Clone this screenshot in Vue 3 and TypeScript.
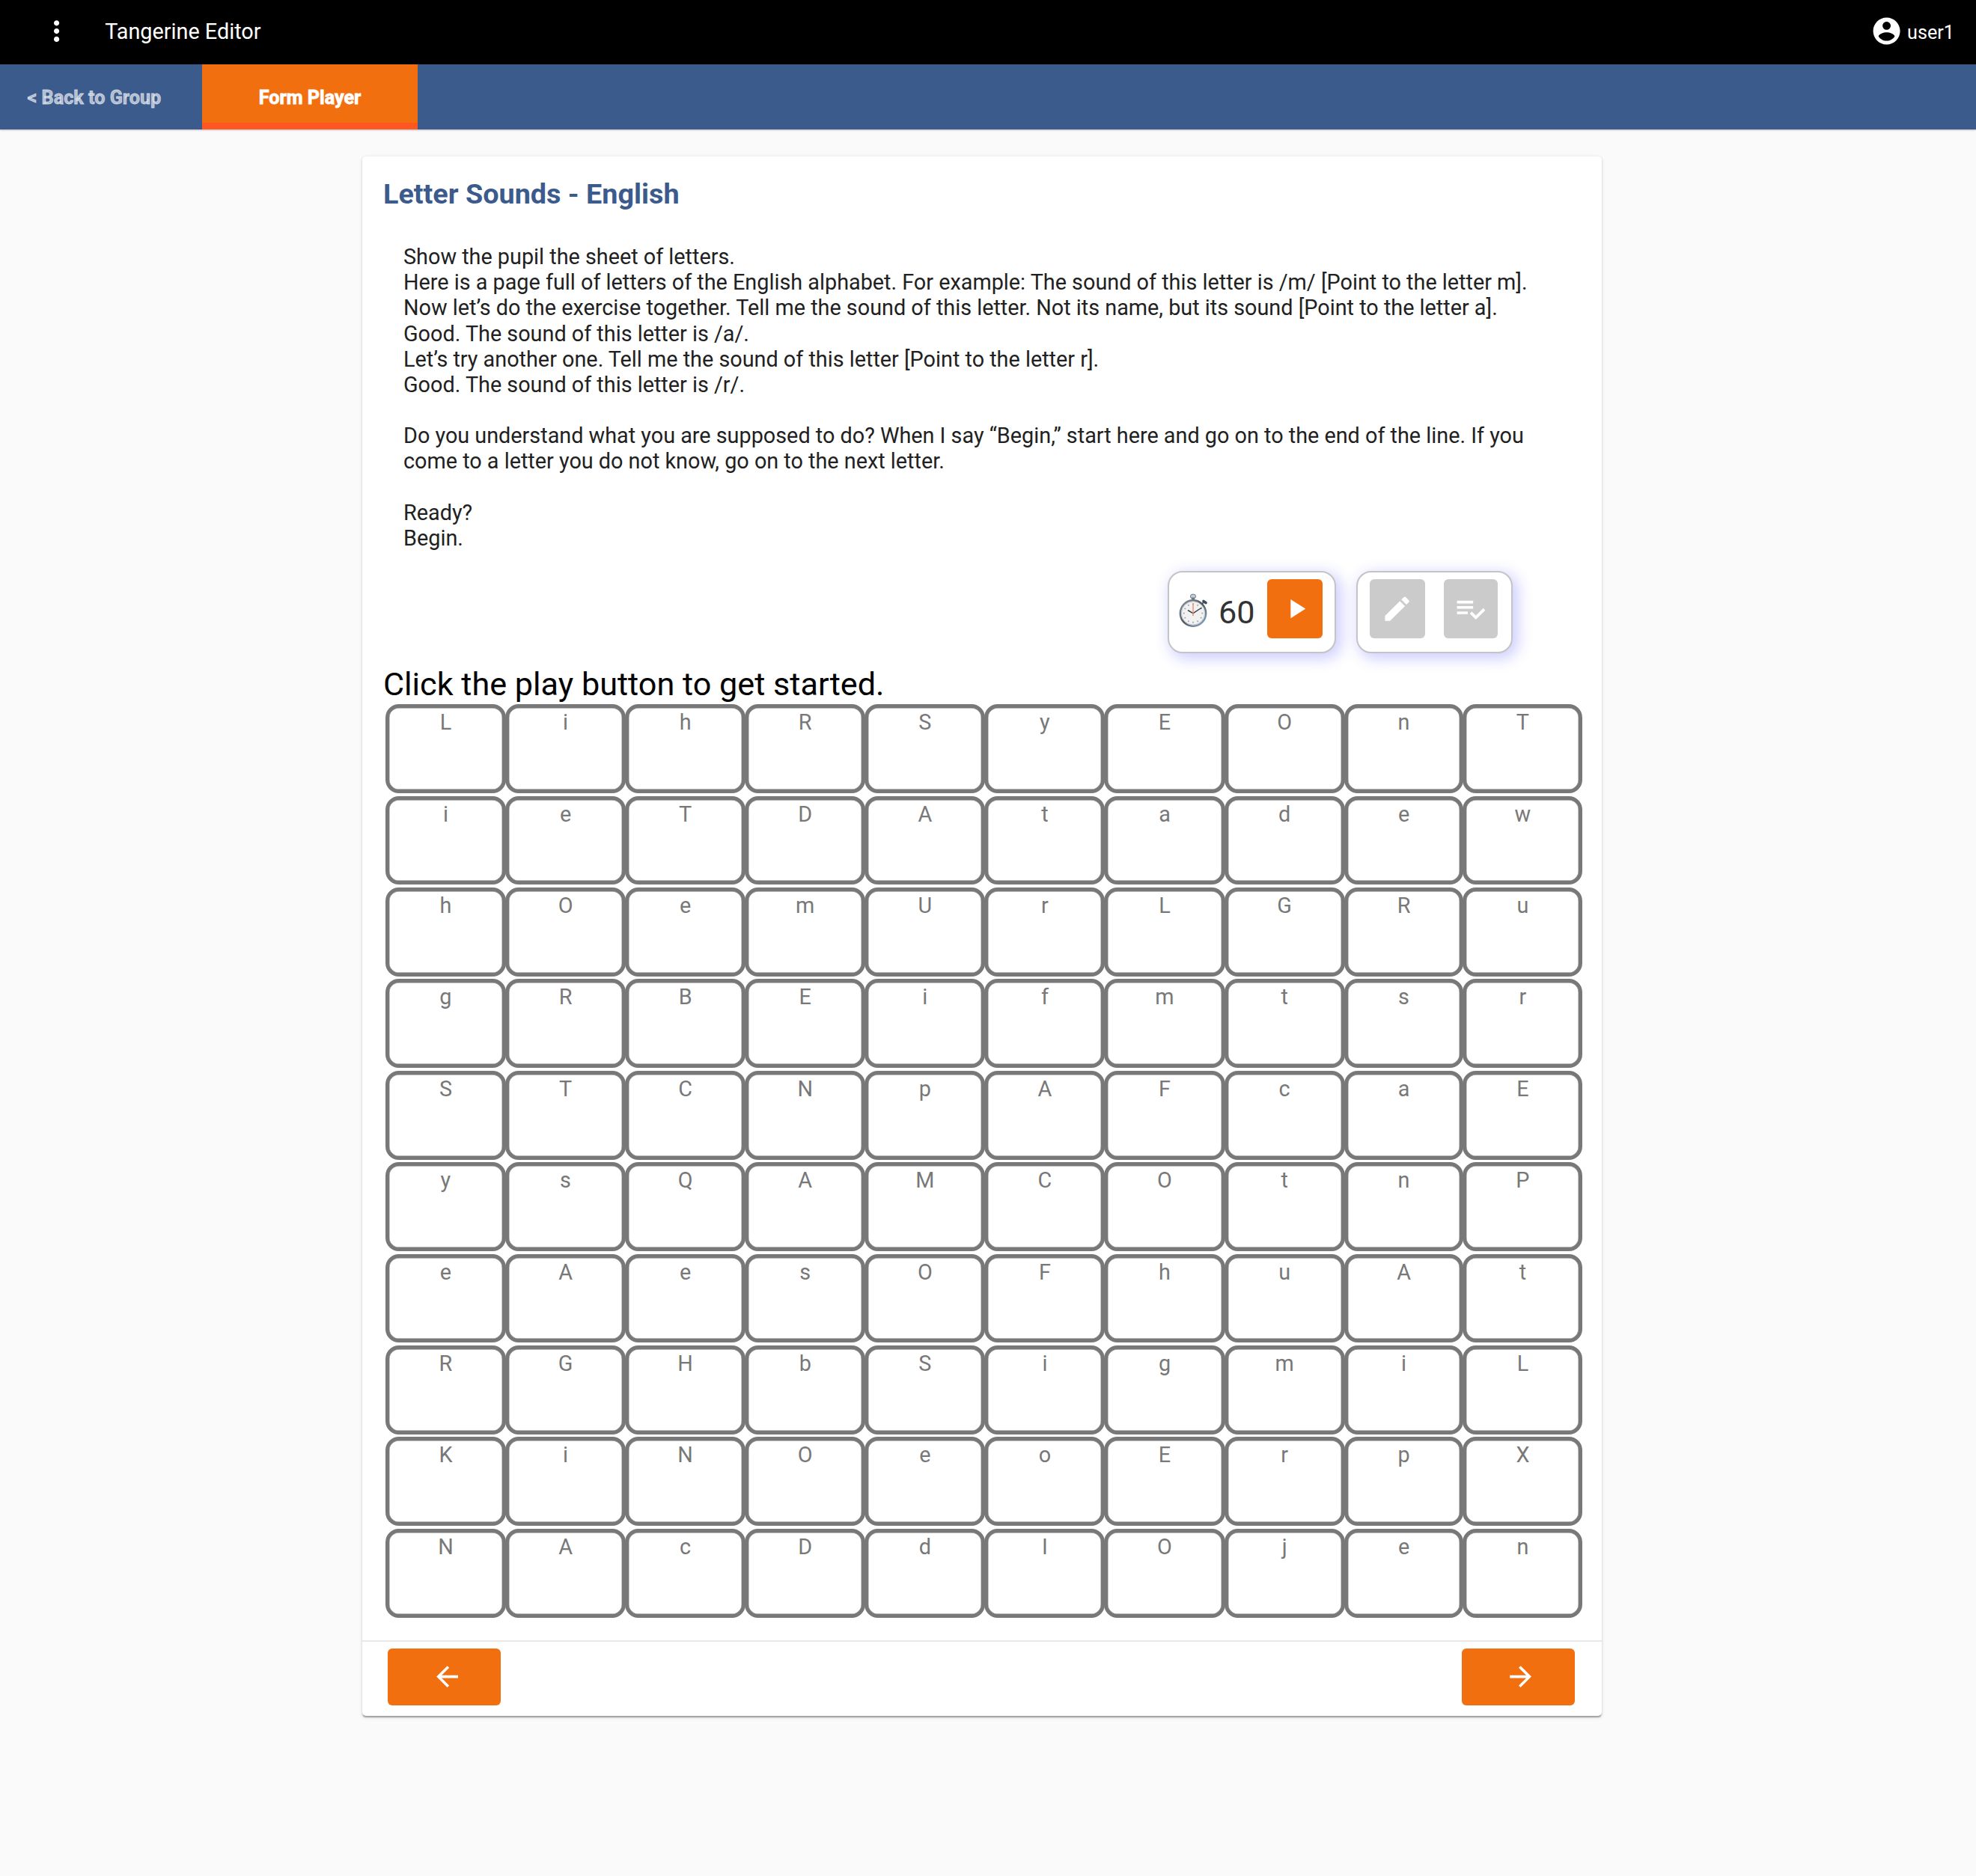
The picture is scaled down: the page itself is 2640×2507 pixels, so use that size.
<script setup lang="ts">
const rows: string[] = [
  'LihRSyEOnT',
  'ieTDAtadew',
  'hOemUrLGRu',
  'gRBEifmtsr',
  'STCNpAFcaE',
  'ysQAMCOtnP',
  'eAesOFhuAt',
  'RGHbSigmiL',
  'KiNOeoErpX',
  'NAcDdIOjen',
]
const instructions: string[] = [
  'Show the pupil the sheet of letters.',
  'Here is a page full of letters of the English alphabet. For example: The sound of this letter is /m/ [Point to the letter m].',
  'Now let’s do the exercise together. Tell me the sound of this letter. Not its name, but its sound [Point to the letter a].',
  'Good. The sound of this letter is /a/.',
  'Let’s try another one. Tell me the sound of this letter [Point to the letter r].',
  'Good. The sound of this letter is /r/.',
  '',
  'Do you understand what you are supposed to do? When I say “Begin,” start here and go on to the end of the line. If you',
  'come to a letter you do not know, go on to the next letter.',
  '',
  'Ready?',
  'Begin.',
]
const ticks: number[] = Array.from({ length: 12 }, (_, i) => i * 30)
</script>

<template>
  <div class="page">
    <header class="toolbar">
      <svg class="icon menu" viewBox="0 0 24 24"><path d="M12 8c1.1 0 2-.9 2-2s-.9-2-2-2-2 .9-2 2 .9 2 2 2zm0 2c-1.1 0-2 .9-2 2s.9 2 2 2 2-.9 2-2-.9-2-2-2zm0 6c-1.1 0-2 .9-2 2s.9 2 2 2 2-.9 2-2-.9-2-2-2z" /></svg>
      <span class="app-name">Tangerine Editor</span>
      <div class="user">
        <svg class="icon" viewBox="0 0 24 24"><path d="M12 2C6.48 2 2 6.48 2 12s4.48 10 10 10 10-4.48 10-10S17.52 2 12 2zm0 3c1.66 0 3 1.34 3 3s-1.34 3-3 3-3-1.34-3-3 1.34-3 3-3zm0 14.2c-2.5 0-4.71-1.28-6-3.22.03-1.99 4-3.08 6-3.08 1.99 0 5.97 1.09 6 3.08-1.29 1.94-3.5 3.22-6 3.22z" /></svg>
        <span class="user-name">user1</span>
      </div>
    </header>
    <nav class="tabs">
      <a class="tab back">&lt; Back to Group</a>
      <a class="tab active">Form Player</a>
    </nav>
    <main class="card">
      <h1 class="title">Letter Sounds - English</h1>
      <div class="instructions">
        <div v-for="(line, i) in instructions" :key="i" class="line">{{ line }}</div>
      </div>
      <div class="controls">
        <div class="panel timer">
          <svg class="stopwatch" viewBox="0 0 38 46">
            <defs>
              <linearGradient id="rim" x1="0" y1="0" x2="1" y2="1">
                <stop offset="0" stop-color="#8a98a6" />
                <stop offset="0.5" stop-color="#4c535b" />
                <stop offset="1" stop-color="#8fb0d0" />
              </linearGradient>
            </defs>
            <ellipse cx="19" cy="4" rx="3.6" ry="3" fill="#c3ccd3" stroke="#717c86" stroke-width="1" />
            <rect x="17" y="5.5" width="4" height="4.5" fill="#66798c" />
            <path d="M30.5 14.5l3-3" stroke="#56687a" stroke-width="2" />
            <path d="M33 10.5l3 2" stroke="#3d4c5c" stroke-width="3.6" stroke-linecap="round" />
            <circle cx="19" cy="26.5" r="17.2" fill="#f2f2f2" stroke="url(#rim)" stroke-width="2.4" />
            <circle cx="19" cy="26.5" r="15.6" fill="none" stroke="#b4c2cf" stroke-width="0.9" />
            <path v-for="t in ticks" :key="t" d="M19 13.2v2" stroke="#a3a3a3" stroke-width="1.6" :transform="`rotate(${t} 19 26.5)`" />
            <path d="M12 22.5l7 4.2L30.5 19" fill="none" stroke="#36434a" stroke-width="1.5" />
            <path d="M19 13v17" stroke="#f58a70" stroke-width="1.4" />
          </svg>
          <span class="seconds">60</span>
          <button class="btn play"><svg class="icon" viewBox="0 0 24 24"><path d="M8 5v14l11-7z" /></svg></button>
        </div>
        <div class="panel modes">
          <button class="btn mark"><svg class="icon" viewBox="0 0 24 24"><path d="M3 17.25V21h3.75L17.81 9.94l-3.75-3.75L3 17.25zM20.71 7.04c.39-.39.39-1.02 0-1.41l-2.34-2.34c-.39-.39-1.02-.39-1.41 0l-1.83 1.83 3.75 3.75 1.83-1.83z" /></svg></button>
          <button class="btn last"><svg class="icon" viewBox="0 0 24 24"><path d="M14 10H2v2h12v-2zm0-4H2v2h12V6zM2 16h8v-2H2v2zm19.5-4.5L23 13l-6.99 7-4.51-4.5L13 14l3.01 3 5.49-5.5z" /></svg></button>
        </div>
      </div>
      <p class="hint">Click the play button to get started.</p>
      <div class="grid">
        <template v-for="(row, r) in rows" :key="r">
          <div v-for="(letter, c) in row.split('')" :key="c" class="cell">{{ letter }}</div>
        </template>
      </div>
      <footer class="footer">
        <button class="btn nav"><svg class="icon" viewBox="0 0 24 24"><path d="M20 11H7.83l5.59-5.59L12 4l-8 8 8 8 1.41-1.41L7.83 13H20v-2z" /></svg></button>
        <button class="btn nav"><svg class="icon" viewBox="0 0 24 24"><path d="M12 4l-1.41 1.41L16.17 11H4v2h12.17l-5.58 5.59L12 20l8-8z" /></svg></button>
      </footer>
    </main>
  </div>
</template>

<style>
body {
  background: #fafafa;
}
</style>

<style scoped>
.page {
  font-family: Roboto, sans-serif;
  height: 2507px;
  background: #fafafa;
}
.icon {
  width: 43.2px;
  height: 43.2px;
  fill: #fff;
  display: block;
  flex: none;
}
.toolbar {
  height: 86.4px;
  box-sizing: border-box;
  background: #000;
  color: #fff;
  display: flex;
  align-items: flex-start;
  padding: 20px 29px 0 54px;
}
.app-name {
  margin: 5px 0 0 43px;
  font-size: 28.8px;
  line-height: 34px;
}
.user {
  margin-left: auto;
  display: flex;
}
.user-name {
  margin: 9px 0 0 6px;
  font-size: 25.2px;
  line-height: 30px;
}
.tabs {
  height: 86.4px;
  background: #3c5b8d;
  display: flex;
  box-shadow: 0 1px 2px rgba(60, 40, 70, 0.3);
}
.tab {
  box-sizing: border-box;
  height: 86.4px;
  font-size: 25.2px;
  font-weight: 700;
  line-height: 89.4px;
  color: rgba(255, 255, 255, 0.6);
  -webkit-text-stroke: 0.8px currentColor;
}
.back {
  width: 270px;
  padding-left: 36.5px;
}
.active {
  width: 288px;
  text-align: center;
  color: #fff;
  background: #f26f10;
  box-shadow: inset 0 -9px #ff5722;
}
.card {
  box-sizing: border-box;
  width: 1656px;
  height: 2084px;
  margin: 36.2px 0 0 484px;
  background: #fff;
  border-radius: 5px;
  display: flex;
  flex-direction: column;
  box-shadow: 0 3.6px 1.8px -1.8px rgba(0, 0, 0, 0.2), 0 1.8px 1.8px rgba(0, 0, 0, 0.14), 0 1.8px 5.4px rgba(0, 0, 0, 0.12);
}
.title {
  margin: 28px 0 0 28px;
  font-size: 37.75px;
  line-height: 44px;
  font-weight: 700;
  color: #3c5b8d;
}
.instructions {
  margin: 45px 0 0 55px;
  font-size: 28.8px;
  color: #212121;
}
.line {
  height: 34.2px;
  line-height: 34.2px;
  white-space: nowrap;
}
.controls {
  display: flex;
  margin: 27px 0 0 1076px;
  gap: 27px;
}
.panel {
  box-sizing: border-box;
  height: 110px;
  border: 2px solid #c4c4c4;
  border-radius: 20px;
  box-shadow: 5px 5px 20px 2px #ccccff;
  display: flex;
  align-items: flex-start;
  background: #fff;
}
.timer {
  width: 225px;
  padding: 9px 0 0 13px;
}
.modes {
  width: 209px;
  padding: 9px 0 0 16px;
  gap: 25px;
}
.stopwatch {
  width: 38px;
  height: 46px;
  margin-top: 19px;
  flex: none;
}
.seconds {
  margin: 20px 0 0 15px;
  width: 64px;
  flex: none;
  font-size: 43.2px;
  line-height: 50px;
  color: #333;
}
.btn {
  border: 0;
  padding: 0;
  border-radius: 6px;
  background: #f26f10;
  display: flex;
  align-items: center;
  justify-content: center;
}
.play {
  width: 74px;
  height: 79px;
  margin-left: 1px;
  padding-left: 3px;
}
.mark,
.last {
  width: 74px;
  height: 79px;
  background: #cbcbcb;
}
.mark {
  padding-right: 1px;
}
.last {
  width: 72px;
}
.hint {
  margin: 17px 0 0 28px;
  font-size: 43.2px;
  line-height: 50px;
  color: #000;
}
.grid {
  margin: 1px 0 0 31.4px;
  display: grid;
  grid-template-columns: repeat(8, 160.1px) 158.8px 159px;
  grid-auto-rows: 118.8px;
  row-gap: 3.6px;
}
.cell {
  box-sizing: border-box;
  margin: 0 -0.5px;
  border: 5.4px solid #787878;
  border-radius: 18px;
  box-shadow: inset 0 0 0 0.4px #787878;
  font-size: 28.8px;
  line-height: 38px;
  text-align: center;
  color: #787878;
}
.footer {
  margin-top: auto;
  box-sizing: border-box;
  height: 101px;
  border-top: 2px solid #e8e8e8;
  padding: 9px 36px 0 34px;
  display: flex;
  justify-content: space-between;
}
.nav {
  box-sizing: border-box;
  width: 151.2px;
  height: 75.6px;
  padding-left: 7px;
}
</style>
